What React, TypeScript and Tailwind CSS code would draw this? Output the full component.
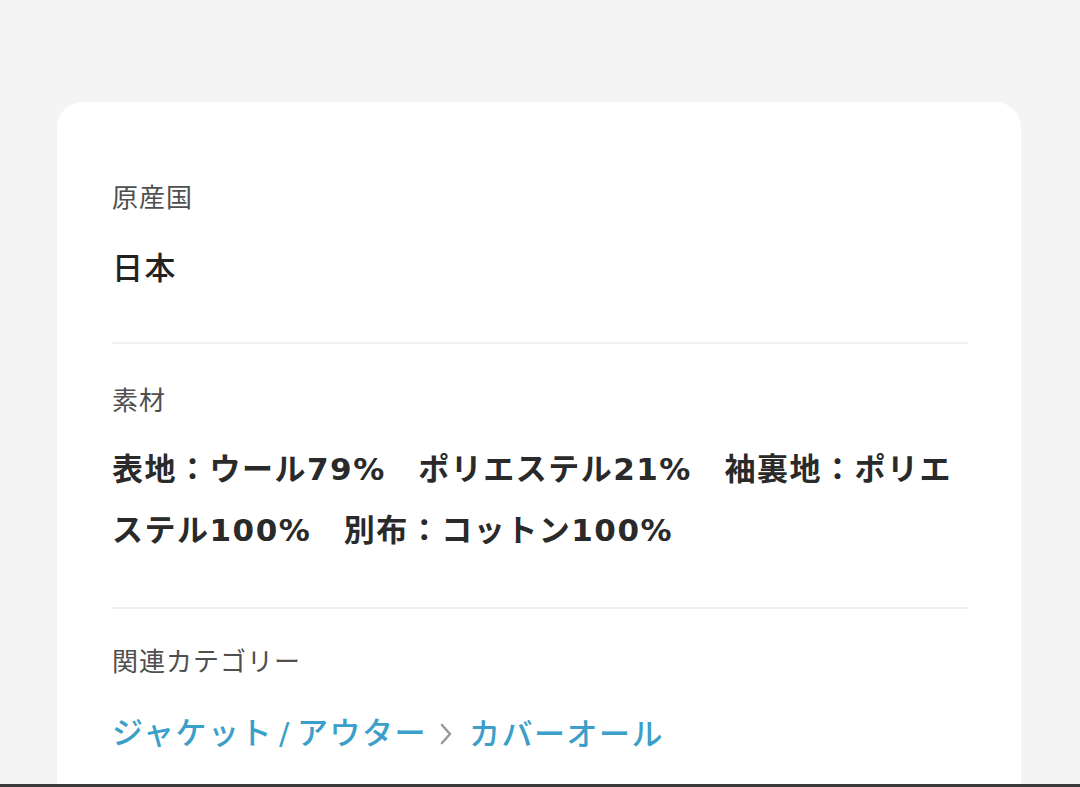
export default function App() {
  const cjk = { fontFamily: '"Noto Sans CJK JP", "Noto Sans", sans-serif' };
  const mixed = { fontFamily: '"DejaVu Sans", "Noto Sans CJK JP", sans-serif' };
  return (
    <div className="h-[787px] w-[1080px] bg-[#f4f4f4] flex flex-col overflow-hidden" style={cjk}>
      <div className="flex-1 mt-[102px] ml-[57px] w-[964px] bg-white rounded-t-[26px] pl-[55px] pr-[53px] pt-[76px]">
        <div className="text-[26px] leading-[36px] tracking-[1px] text-[#4f4f4f]">原産国</div>
        <div className="mt-[22px] text-[31px] leading-[60px] tracking-[1.5px] text-[#222] font-medium">日本</div>
        <div className="mt-[46px] h-[2px] bg-[#f1f1f1]" />
        <div className="mt-[37px] text-[26px] leading-[36px] tracking-[1px] text-[#4f4f4f]">素材</div>
        <div className="mt-[22px] text-[31px] leading-[61px] tracking-[1.5px] text-[#2a2a2a] font-bold" style={mixed}>
          表地：ウール79%　ポリエステル21%　袖裏地：ポリエステル100%　別布：コットン100%
        </div>
        <div className="mt-[46px] h-[2px] bg-[#f1f1f1]" />
        <div className="mt-[33px] text-[26px] leading-[36px] tracking-[1px] text-[#4f4f4f]">関連カテゴリー</div>
        <div className="mt-[31px] flex items-center text-[31px] leading-[44px] tracking-[1.5px] text-[#3b9fc9] font-medium">
          <span>
            ジャケット<span className="mx-[6px]" style={mixed}>/</span>アウター
          </span>
          <svg width="14" height="24" viewBox="0 0 14 24" className="ml-[12px] mr-[16px] translate-y-[2px]">
            <polyline points="3,3 11,12 3,21" fill="none" stroke="#9a9a9a" strokeWidth="2.6" strokeLinecap="round" strokeLinejoin="round" />
          </svg>
          <span>カバーオール</span>
        </div>
      </div>
      <div className="h-[3px] bg-[#3a3a3a]" />
    </div>
  );
}
